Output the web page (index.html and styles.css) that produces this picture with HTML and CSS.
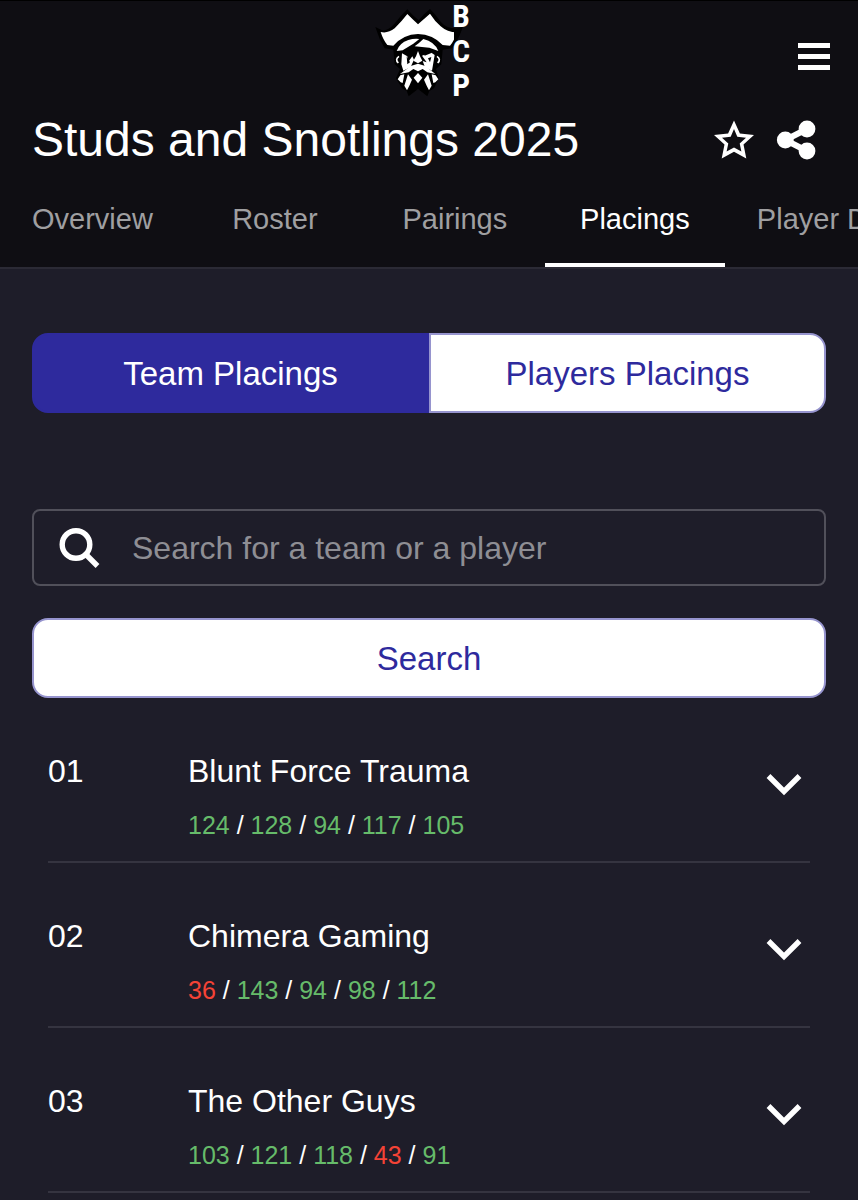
FILE: index.html
```html
<!DOCTYPE html>
<html lang="en">
<head>
<meta charset="utf-8">
<meta name="viewport" content="width=device-width, initial-scale=1">
<title>Studs and Snotlings 2025</title>
<link rel="stylesheet" href="styles.css">
</head>
<body>
<header class="header">
  <div class="topbar">
    <a class="logo" href="#" aria-label="BCP home">
      <svg class="logo-art" width="110" height="100" viewBox="18 0 330 300" aria-hidden="true">
        <path class="ink" d="M22 78L42 88Q60 90 78 70Q98 44 118 25L134 42L152 58L168 40L186 24Q204 42 218 62Q236 84 270 82L284 78L270 114L252 142L224 146L220 190L204 204L212 232L198 262L184 270L178 286L150 264L122 286L116 270L102 262L84 232L96 204L80 190L76 146L50 142L36 116Z"/>
        <path class="bone" d="M38 93Q60 98 80 82Q102 60 118 39L134 55L150 70L168 54L186 38Q200 60 218 76Q238 94 266 94Q258 122 246 134L224 132Q194 100 150 99Q106 100 76 134L58 132Q46 118 38 93Z"/>
        <g transform="translate(66 108)">
          <path class="bone" d="M20 42Q28 18 55 9Q72 4 88 6L70 20L38 40Z"/>
          <path class="bone" d="M100 6Q134 14 145 42L118 32L74 28Q88 18 100 6Z"/>
          <path class="bone" d="M36 49L52 58L55 74L67 58L72 68L62 90L40 101L34 82Z"/>
          <path class="bone" d="M84 42L90 58L97 71L84 79L70 71L78 58Z"/>
          <path class="bone" d="M96 56L122 46L134 54L126 101L105 91L98 72L110 76Z"/>
          <path class="ink" d="M98 42L122 40L126 47L104 56ZM114 64L124 60L120 76ZM50 58L60 76L52 82Z"/>
          <path class="wire" d="M27 58Q14 67 25 78M141 58Q154 67 143 78"/>
          <path class="bone" d="M84 80L106 87L136 111L112 106L98 96L84 103L70 96L56 106L30 111L62 87Z"/>
          <path class="bone" d="M84 108L97 122L84 139L71 122Z"/>
          <path class="bone" d="M31 115L43 112L38 138L32 136L23 127ZM137 115L125 112L130 138L136 136L145 127Z"/>
          <path class="bone" d="M54 112L66 128L58 146L51 160L43 146ZM114 112L102 128L110 146L117 160L125 146Z"/>
        </g>
        <g class="logo-text">
          <text x="253" y="79">B</text>
          <text x="253" y="184">C</text>
          <text x="253" y="284">P</text>
        </g>
        <path class="ink" d="M258 90L284 78L274 104L258 120Z"/>
      </svg>
    </a>
    <button class="icon-button menu" type="button" aria-label="Menu">
      <svg width="32" height="28" viewBox="0 0 32 28" aria-hidden="true"><path d="M0 0h32v5H0zM0 11h32v5H0zM0 22h32v5H0z"/></svg>
    </button>
  </div>
  <div class="title-row">
    <h1 class="title">Studs and Snotlings 2025</h1>
    <div class="actions">
      <button class="icon-button" type="button" aria-label="Favourite">
        <svg width="48" height="48" viewBox="0 0 48 48" aria-hidden="true"><path fill-rule="evenodd" d="M24 4.5L29.9 17.4L44 19L33.5 28.6L36.3 42.5L24 35.8L11.7 42.5L14.5 28.6L4 19L18.1 17.4ZM24 13L27.3 20.8L36 21.7L29.7 27.4L31.4 35.6L24 31.4L16.6 35.6L18.3 27.4L12 21.7L20.7 20.8Z"/></svg>
      </button>
      <button class="icon-button" type="button" aria-label="Share">
        <svg width="48" height="48" viewBox="0 0 48 48" aria-hidden="true"><circle cx="13.3" cy="24" r="8.4"/><circle cx="35" cy="13" r="8.4"/><circle cx="35" cy="35" r="8.4"/><path class="share-arms" d="M35 13L13.3 24L35 35"/></svg>
      </button>
    </div>
  </div>
  <nav class="tabs" aria-label="Event sections">
    <a class="tab" href="#">Overview</a>
    <a class="tab" href="#">Roster</a>
    <a class="tab" href="#">Pairings</a>
    <a class="tab active" href="#" aria-current="page">Placings</a>
    <a class="tab" href="#">Player Details</a>
  </nav>
</header>
<main class="main">
  <div class="toggle">
    <button class="toggle-button selected" type="button" aria-pressed="true">Team Placings</button>
    <button class="toggle-button" type="button" aria-pressed="false">Players Placings</button>
  </div>
  <form class="search">
    <label class="field">
      <svg width="48" height="48" viewBox="0 0 48 48" aria-hidden="true"><g class="lens"><circle cx="20" cy="20.5" r="13.8"/><path d="M29 29.5L41.5 42"/></g></svg>
      <input class="field-input" type="text" placeholder="Search for a team or a player" aria-label="Search for a team or a player">
    </label>
    <button class="submit" type="submit">Search</button>
  </form>
  <ol class="placings">
    <li class="row">
      <span class="rank">01</span>
      <div class="team">
        <h2 class="name">Blunt Force Trauma</h2>
        <p class="scores"><span class="win">124</span> / <span class="win">128</span> / <span class="win">94</span> / <span class="win">117</span> / <span class="win">105</span></p>
      </div>
      <button class="icon-button expand" type="button" aria-label="Expand Blunt Force Trauma"><svg width="36" height="24" viewBox="0 0 36 24" aria-hidden="true"><path class="chevron" d="M2.5 3L18 18.5L33.5 3"/></svg></button>
    </li>
    <li class="row">
      <span class="rank">02</span>
      <div class="team">
        <h2 class="name">Chimera Gaming</h2>
        <p class="scores"><span class="loss">36</span> / <span class="win">143</span> / <span class="win">94</span> / <span class="win">98</span> / <span class="win">112</span></p>
      </div>
      <button class="icon-button expand" type="button" aria-label="Expand Chimera Gaming"><svg width="36" height="24" viewBox="0 0 36 24" aria-hidden="true"><path class="chevron" d="M2.5 3L18 18.5L33.5 3"/></svg></button>
    </li>
    <li class="row">
      <span class="rank">03</span>
      <div class="team">
        <h2 class="name">The Other Guys</h2>
        <p class="scores"><span class="win">103</span> / <span class="win">121</span> / <span class="win">118</span> / <span class="loss">43</span> / <span class="win">91</span></p>
      </div>
      <button class="icon-button expand" type="button" aria-label="Expand The Other Guys"><svg width="36" height="24" viewBox="0 0 36 24" aria-hidden="true"><path class="chevron" d="M2.5 3L18 18.5L33.5 3"/></svg></button>
    </li>
  </ol>
</main>
</body>
</html>
```
FILE: styles.css
```css
* {
  box-sizing: border-box;
}

body {
  margin: 0;
  background: #1e1d29;
  color: #fff;
  font-family: "Liberation Sans", Arial, Helvetica, sans-serif;
  font-size: 32px;
}

button,
input {
  font: inherit;
  color: inherit;
}

button {
  cursor: pointer;
}

svg {
  display: block;
}

.header {
  background: #0f0e13;
  border-top: 1px solid #000;
  border-bottom: 2px solid #2b2a35;
}

.topbar {
  display: grid;
  grid-template-columns: 1fr auto 1fr;
  height: 111px;
  padding: 0 28px;
}

.logo {
  grid-column: 2;
}

.logo-art {
  overflow: visible;
}

.ink {
  fill: #000;
}

.bone {
  fill: #fff;
}

.wire {
  fill: none;
  stroke: #fff;
  stroke-width: 5;
}

.logo-text {
  fill: #fff;
  font-family: "Roboto Condensed", "Liberation Sans Narrow", Roboto, sans-serif;
  font-size: 94px;
  font-weight: 700;
}

.icon-button {
  display: flex;
  padding: 0;
  border: 0;
  background: none;
  fill: #fff;
}

.menu {
  justify-self: end;
  align-self: center;
}

.title-row {
  display: flex;
  align-items: center;
  justify-content: space-between;
  padding: 0 38px 0 32px;
}

.title {
  margin: 0;
  font-size: 48px;
  font-weight: 400;
  line-height: 56px;
}

.actions {
  display: flex;
  gap: 14px;
}

.share-arms {
  fill: none;
  stroke: #fff;
  stroke-width: 6;
}

.tabs {
  display: flex;
  height: 96px;
  margin-top: 3px;
  overflow: hidden;
}

.tab {
  display: flex;
  flex: none;
  align-items: center;
  justify-content: center;
  min-width: 180px;
  padding: 0 32px;
  border: solid transparent;
  border-width: 4px 0;
  color: #9f9fa1;
  font-size: 29px;
  text-decoration: none;
  white-space: nowrap;
}

.tab.active {
  border-bottom-color: #fff;
  color: #fff;
}

.main {
  padding: 64px 32px 0;
}

.toggle {
  display: grid;
  grid-template-columns: 1fr 1fr;
}

.toggle-button,
.submit {
  height: 80px;
  padding: 2px 0 0;
  border: 2px solid #9694ce;
  border-radius: 16px;
  background: #fff;
  color: #2e2a9d;
  font-size: 33px;
}

.toggle-button {
  border-radius: 0 16px 16px 0;
}

.toggle-button.selected {
  border-color: #2e2a9d;
  border-radius: 16px 0 0 16px;
  background: #2e2a9d;
  color: #fff;
}

.search {
  display: grid;
  gap: 32px;
  margin-top: 96px;
}

.field {
  display: flex;
  align-items: center;
  gap: 28px;
  height: 77px;
  padding: 0 22px;
  border: 2px solid #51505a;
  border-radius: 8px;
}

.lens {
  fill: none;
  stroke: #fff;
  stroke-width: 5.4;
}

.field-input {
  flex: 1;
  min-width: 0;
  padding: 2px 0 0;
  border: 0;
  outline: 0;
  background: none;
}

.field-input::placeholder {
  color: #8e8e94;
  opacity: 1;
}

.placings {
  margin: 0;
  padding: 0 16px;
  list-style: none;
}

.row {
  display: grid;
  grid-template-columns: 140px 1fr 52px;
  padding: 53px 0 20px;
  border-bottom: 2px solid #353440;
}

.rank,
.name {
  margin: 0;
  font-size: 32px;
  font-weight: 400;
  line-height: 40px;
}

.scores {
  margin: 18px 0 0;
  font-size: 25px;
  line-height: 32px;
}

.win {
  color: #66bb6a;
}

.loss {
  color: #f44336;
}

.expand {
  align-self: start;
  justify-content: center;
  padding-top: 22px;
}

.chevron {
  fill: none;
  stroke: #fff;
  stroke-width: 5.4;
}
```
